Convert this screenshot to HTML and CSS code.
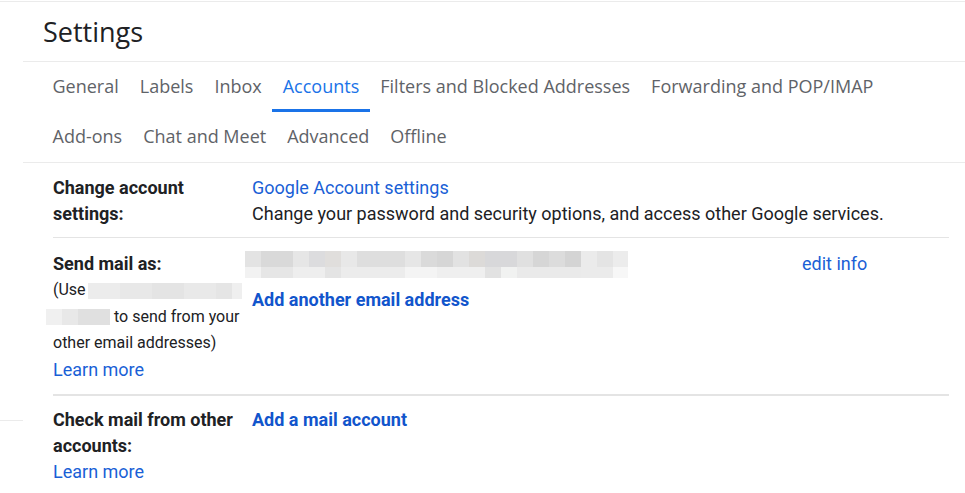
FILE: index.html
```html
<!DOCTYPE html>
<html lang="en">
<head>
    <meta charset="UTF-8">
    <meta name="viewport" content="width=device-width, initial-scale=1.0">
    <title>Settings - Accounts</title>
    <link rel="stylesheet" href="styles.css">
</head>
<body>
    <div class="topline"></div>
    <div class="header"><h1>Settings</h1></div>
    <div class="tabs">
        <a class="tab">General</a>
        <a class="tab">Labels</a>
        <a class="tab">Inbox</a>
        <a class="tab active">Accounts</a>
        <a class="tab">Filters and Blocked Addresses</a>
        <a class="tab">Forwarding and POP/IMAP</a>
        <a class="tab">Add-ons</a>
        <a class="tab">Chat and Meet</a>
        <a class="tab">Advanced</a>
        <a class="tab">Offline</a>
    </div>
    <div class="side-line"></div>
    <div class="content">
        <div class="row first">
            <div class="label">Change account settings:</div>
            <div class="value">
                <a class="link">Google Account settings</a><br>
                Change your password and security options, and access other Google services.
            </div>
        </div>
        <div class="row second">
            <div class="label">
                Send mail as:
                <div class="note">(Use <span class="blur blur-a"></span> <span class="blur blur-b"></span> to send from your other email addresses)</div>
                <a class="link">Learn more</a>
            </div>
            <div class="value">
                <div class="address">
                    <span class="blur blur-email"></span>
                    <a class="link">edit info</a>
                </div>
                <a class="link bold">Add another email address</a>
            </div>
        </div>
        <div class="row third">
            <div class="label">
                Check mail from other accounts:<br>
                <a class="link normal">Learn more</a>
            </div>
            <div class="value">
                <a class="link bold">Add a mail account</a>
            </div>
        </div>
    </div>
</body>
</html>
```

FILE: styles.css
```css
body {
    margin: 0;
    background-color: #fff;
    font-family: Roboto, Arial, sans-serif;
    color: #202124;
    overflow: hidden;
}
.topline {
    margin-top: 1px;
    height: 1px;
    background-color: #ebebeb;
}
.header {
    height: 59px;
    padding-left: 43px;
    display: flex;
    align-items: center;
}
.header h1 {
    margin: 0;
    font-family: "Open Sans", sans-serif;
    font-weight: 400;
    font-size: 27px;
    color: #202124;
}
.tabs {
    margin-left: 23px;
    padding-left: 19px;
    border-top: 1px solid #ebebeb;
    border-bottom: 1px solid #ebebeb;
    display: flex;
    flex-wrap: wrap;
}
.tab {
    height: 50px;
    padding: 1px 10.5px 0;
    box-sizing: border-box;
    display: flex;
    align-items: center;
    font-family: "Open Sans", sans-serif;
    font-size: 18px;
    color: #5f6368;
    border-bottom: 3px solid transparent;
    cursor: pointer;
}
.tab.active {
    color: #1a73e8;
    border-bottom-color: #1a73e8;
}
.side-line {
    position: absolute;
    left: 0;
    top: 420px;
    width: 23px;
    height: 1px;
    background-color: #ebebeb;
}
.content {
    margin-left: 53px;
    width: 896px;
}
.row {
    display: flex;
    border-bottom: 1px solid #e4e4e4;
    font-size: 18px;
    line-height: 26px;
}
.row.first {
    padding: 12px 0 10px;
}
.row.second {
    padding: 13px 0 11px;
    border-bottom-width: 2px;
}
.row.third {
    padding: 11px 0;
    border-bottom: none;
}
.label {
    width: 199px;
    flex-shrink: 0;
    font-weight: 700;
}
.note {
    font-weight: 400;
    font-size: 16px;
    line-height: 26.5px;
}
.value {
    flex: 1;
}
.link {
    color: #1a5fd6;
    font-weight: 400;
    cursor: pointer;
}
.link.bold {
    color: #1155cc;
    font-weight: 700;
}
.address {
    display: flex;
    align-items: center;
    height: 26px;
    margin-bottom: 10px;
}
.blur {
    display: inline-block;
    vertical-align: middle;
}
.blur-email {
    width: 383px;
    height: 27px;
    margin-left: -7px;
    margin-right: 174px;
    background:
        linear-gradient(90deg, #e3e3e3 0 16px, #d9d9d9 16px 48px, #e6e6e6 48px 64px, #dcdcde 64px 80px, #e0dedc 80px 96px, #e8e8e8 96px 112px, #dedede 112px 160px, #e6e6e6 160px 176px, #dadada 176px 192px, #d6d6d6 192px 208px, #e2e2e2 208px 224px, #dcdad8 224px 240px, #d8d8da 240px 272px, #e0e0e0 272px 288px, #d6d6d6 288px 304px, #dcdcdc 304px 320px, #d4d4d4 320px 336px, #ebebeb 336px 352px, #e4e4e4 352px 368px, #ececec 368px 383px) top / 100% 16px no-repeat,
        linear-gradient(90deg, #f2f2f2 0 16px, #e6e6e6 16px 48px, #eeeeee 48px 80px, #e4e4e4 80px 96px, #ececec 96px 160px, #f4f4f4 160px 192px, #efefef 192px 240px, #e2e2e2 240px 256px, #f1f2f1 256px 272px, #eaeaea 272px 336px, #ebebeb 336px 368px, #f7f7f7 368px 383px) bottom / 100% 11px no-repeat;
}
.blur-a {
    width: 154px;
    height: 16px;
    margin-left: -2px;
    background: linear-gradient(90deg, #ececec 0 32px, #e8e8e8 32px 64px, #e4e4e4 64px 96px, #e9e9e9 96px 128px, #e5e5e5 128px 144px, #efefef 144px 154px);
}
.blur-b {
    width: 64px;
    height: 16px;
    margin-left: -7px;
    background: linear-gradient(90deg, #f0f0f0 0 16px, #e8e8e8 16px 32px, #e0e0e0 32px 64px);
}
```
